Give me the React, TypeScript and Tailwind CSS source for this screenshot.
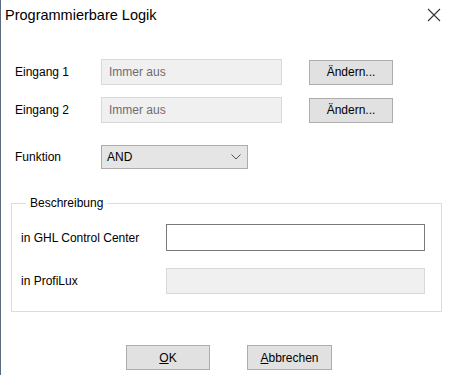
export default function App() {
  return (
    <div
      className="w-[450px] h-[375px] bg-white border-l border-[#5b6b7b] flex flex-col text-[12px] text-black"
      style={{ fontFamily: '"Liberation Sans", Arial, sans-serif' }}
    >
      {/* Title bar */}
      <div className="h-[32px] flex items-start justify-between pl-[4px] pr-[9px] pt-[7px]">
        <span className="text-[14.5px] leading-[17px]">Programmierbare Logik</span>
        <svg width="14" height="14" viewBox="0 0 14 14" className="mt-[1px]">
          <path d="M1 1 L13 13 M13 1 L1 13" stroke="#333" strokeWidth="1.1" fill="none" />
        </svg>
      </div>

      {/* Inputs */}
      <div className="flex flex-col gap-[12px] mt-[27px]">
        {["Eingang 1", "Eingang 2"].map((label) => (
          <div key={label} className="flex items-center h-[26px]">
            <span className="w-[100px] pl-[14px]">{label}</span>
            <div className="w-[181px] h-[26px] bg-[#f0f0f0] border border-[#d9d9d9] flex items-center px-[7px] text-[#6d6d6d]">
              Immer aus
            </div>
            <button className="ml-[27px] w-[84px] h-[25px] bg-[#e1e1e1] border border-[#adadad] flex items-center justify-center">
              Ändern...
            </button>
          </div>
        ))}
      </div>

      {/* Funktion */}
      <div className="flex items-center mt-[22px] h-[24px]">
        <span className="w-[100px] pl-[14px]">Funktion</span>
        <div className="w-[147px] h-[24px] bg-[#e5e5e5] border border-[#acacac] flex items-center justify-between pl-[5px] pr-[6px]">
          <span>AND</span>
          <svg width="10" height="6" viewBox="0 0 10 6">
            <path d="M0.5 0.5 L5 5 L9.5 0.5" stroke="#555" strokeWidth="1" fill="none" />
          </svg>
        </div>
      </div>

      {/* Beschreibung */}
      <fieldset className="ml-[10px] mt-[26px] w-[431px] h-[117px] border border-[#dcdcdc] pl-[9px]">
        <legend className="ml-[5px] px-[4px] leading-[16px]">Beschreibung</legend>
        <div className="flex flex-col gap-[17px] mt-[13px]">
          <div className="flex items-center h-[27px]">
            <span className="w-[145px]">in GHL Control Center</span>
            <div className="w-[259px] h-[27px] bg-white border border-[#7a7a7a]" />
          </div>
          <div className="flex items-center h-[26px]">
            <span className="w-[145px]">in ProfiLux</span>
            <div className="w-[259px] h-[26px] bg-[#f0f0f0] border border-[#d9d9d9]" />
          </div>
        </div>
      </fieldset>

      {/* Buttons */}
      <div className="flex gap-[37px] ml-[125px] mt-[33px]">
        <button className="w-[84px] h-[25px] bg-[#e1e1e1] border border-[#adadad] flex items-center justify-center">
          <span><span className="underline">O</span>K</span>
        </button>
        <button className="w-[85px] h-[25px] bg-[#e1e1e1] border border-[#adadad] flex items-center justify-center">
          <span><span className="underline">A</span>bbrechen</span>
        </button>
      </div>
    </div>
  );
}
